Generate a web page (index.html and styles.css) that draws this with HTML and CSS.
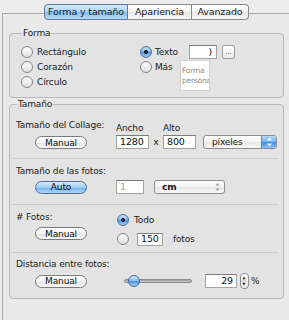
FILE: index.html
```html
<!DOCTYPE html>
<html lang="es">
<head>
<meta charset="utf-8">
<title>Forma y tamaño</title>
<link rel="stylesheet" href="styles.css">
</head>
<body>
<div class="tabs">
  <div class="tab t1 sel">Forma y tamaño</div>
  <div class="tab t2">Apariencia</div>
  <div class="tab t3">Avanzado</div>
</div>
<div class="panel">
  <fieldset class="group forma">
    <legend>Forma</legend>
    <div class="forma-cols">
      <div class="col1">
        <div class="opt"><span class="radio"></span><span class="olbl">Rectángulo</span></div>
        <div class="opt"><span class="radio"></span><span class="olbl">Corazón</span></div>
        <div class="opt"><span class="radio"></span><span class="olbl">Círculo</span></div>
      </div>
      <div class="col2">
        <div class="opt"><span class="radio on"></span><span class="olbl w-texto">Texto</span><span class="field ftexto">)</span><span class="dots">...</span></div>
        <div class="opt top">
          <div class="opt"><span class="radio"></span><span class="olbl w-mas">Más</span></div>
          <div class="custom"><span>Forma</span><span>persona</span></div>
        </div>
      </div>
    </div>
  </fieldset>

  <fieldset class="group tam">
    <legend>Tamaño</legend>

    <div class="sec">
      <div class="left">
        <div class="lbl">Tamaño del Collage:</div>
        <div class="btn">Manual</div>
      </div>
      <div class="right">
        <div class="hdr"><span class="w-ancho">Ancho</span><span>Alto</span></div>
        <div class="frow">
          <span class="field f1280">1280</span><span class="times">x</span><span class="field f800">800</span>
          <span class="popup pix"><span class="ptxt">píxeles</span><span class="parrows blue"><svg width="7" height="10" viewBox="0 0 7 10"><path d="M3.5 0.5 L6 3.5 H1 Z M3.5 9.5 L6 6.5 H1 Z" fill="#fff"/></svg></span></span>
        </div>
      </div>
    </div>

    <div class="sep"></div>

    <div class="sec2">
      <div class="lbl">Tamaño de las fotos:</div>
      <div class="row r2">
        <div class="btn blue">Auto</div>
        <span class="field f1 dis">1</span>
        <span class="popup cm"><span class="ptxt strong">cm</span><span class="parrows"><svg width="7" height="10" viewBox="0 0 7 10"><path d="M3.5 1 L5.5 3.5 H1.5 Z M3.5 9 L5.5 6.5 H1.5 Z" fill="#a0a0a0"/></svg></span></span>
      </div>
    </div>

    <div class="sep sep2"></div>

    <div class="sec sec3">
      <div class="left">
        <div class="lbl"># Fotos:</div>
        <div class="btn b3">Manual</div>
      </div>
      <div class="right r3">
        <div class="opt o1"><span class="radio on"></span><span class="olbl">Todo</span></div>
        <div class="opt o2"><span class="radio"></span><span class="field f150">150</span><span class="olbl fotos">fotos</span></div>
      </div>
    </div>

    <div class="sep sep3"></div>

    <div class="sec4">
      <div class="lbl">Distancia entre fotos:</div>
      <div class="row r4">
        <div class="btn">Manual</div>
        <div class="slider"><span class="knob"></span></div>
        <span class="field f29">29</span>
        <span class="stepper"><svg width="9" height="16" viewBox="0 0 9 16"><path d="M4.5 3 L6.5 6 H2.5 Z M4.5 13 L6.5 10 H2.5 Z" fill="#333"/><path d="M1 8 H8" stroke="#bbb" stroke-width="1"/></svg></span>
        <span class="pct">%</span>
      </div>
    </div>
  </fieldset>
</div>
</body>
</html>
```

FILE: styles.css
```css
html, body {
  margin: 0;
  padding: 0;
}
body {
  width: 289px;
  height: 320px;
  overflow: hidden;
  background: #ececec;
  font-family: "DejaVu Sans", sans-serif;
  font-size: 9px;
  letter-spacing: -0.15px;
  line-height: 12px;
  color: #1b1b1b;
}

/* Tabs */
.tabs {
  display: flex;
  margin: 4px 0 0 44px;
  height: 16px;
  position: relative;
  z-index: 1;
}
.tab {
  box-sizing: border-box;
  height: 16px;
  border: 1px solid #8b8b8b;
  border-left: none;
  background: linear-gradient(#ffffff, #f3f3f3 50%, #e8e8e8 51%, #f6f6f6);
  display: flex;
  align-items: center;
  justify-content: center;
  font-size: 9.5px;
}
.t1 { width: 84px; border-left: 1px solid #6c86a8; border-radius: 4px 0 0 4px; }
.t2 { width: 64px; }
.t3 { width: 57px; border-radius: 0 4px 4px 0; }
.tab.sel {
  background: linear-gradient(#d6eafc, #a9d2f6 50%, #82bdf2 51%, #b6dcfa);
  border-color: #5a7aa3;
}

/* Panel */
.panel {
  margin: -7px 0 0 2px;
  width: 300px;
  height: 320px;
  box-sizing: border-box;
  border-top: 1px solid #a8a8a8;
  border-left: 1px solid #a8a8a8;
  background: #e9e9e9;
  padding: 13px 0 0 6px;
}

.group {
  margin: 0;
  width: 275px;
  box-sizing: border-box;
  border: 1px solid #b9b9b9;
  border-radius: 4px;
  background: #e3e3e3;
  min-width: 0;
}
.group legend {
  padding: 0 1px;
  margin-left: 1px;
  font-size: 9px;
  line-height: 12px;
  color: #1b1b1b;
}

/* Forma */
.forma {
  padding: 5px 5px 6px 11px;
}
.forma-cols {
  display: flex;
}
.col1 {
  width: 119px;
}
.opt {
  display: flex;
  align-items: center;
  height: 15px;
}
.opt.top {
  align-items: flex-start;
  height: auto;
}
.radio {
  flex: none;
  width: 12px;
  height: 12px;
  box-sizing: border-box;
  border-radius: 50%;
  border: 1px solid #8a8a8a;
  background: linear-gradient(#ffffff, #f0f0f0 50%, #dcdcdc);
  box-shadow: inset 0 1px 1px rgba(0,0,0,0.08);
}
.radio.on {
  border-color: #4b74a6;
  background:
    radial-gradient(circle, #15202e 0 1.6px, rgba(21,32,46,0) 2.3px),
    linear-gradient(#d3e8fc, #7ab6f0 50%, #4d97e6 55%, #9dcdf7);
}
.olbl {
  margin-left: 4px;
  white-space: nowrap;
}
.w-texto { width: 34px; margin-left: 3px; }
.w-mas { width: 25px; margin-left: 3px; }

.field {
  box-sizing: border-box;
  height: 14px;
  background: #fff;
  border: 1px solid #a3a3a3;
  border-top-color: #7c7c7c;
  display: flex;
  align-items: center;
  padding: 0 3px;
  font-size: 9.5px;
  color: #111;
}
.ftexto {
  width: 28px;
  justify-content: flex-end;
  padding-right: 4px;
}
.dots {
  box-sizing: border-box;
  margin-left: 5px;
  width: 13px;
  height: 14px;
  border: 1px solid #9d9d9d;
  border-radius: 2px;
  background: linear-gradient(#ffffff, #ececec);
  display: flex;
  align-items: center;
  justify-content: center;
  font-size: 7px;
  color: #444;
  letter-spacing: 0;
}
.custom {
  box-sizing: border-box;
  margin-top: 1px;
  width: 30px;
  height: 31px;
  background: #fff;
  border: 1px solid #d2d2d2;
  overflow: hidden;
  padding: 5px 0 0 1px;
  display: flex;
  flex-direction: column;
  color: #8f8f8f;
  font-size: 7.5px;
  letter-spacing: -0.2px;
  line-height: 10px;
}
.custom span {
  white-space: nowrap;
}

/* Tamaño */
.tam {
  padding: 9px 5px 10px 6px;
}
.sec {
  display: flex;
}
.left {
  width: 100px;
  flex: none;
}
.lbl {
  height: 12px;
  white-space: nowrap;
}
.btn {
  box-sizing: border-box;
  width: 52px;
  height: 13px;
  border: 1px solid #7b7b7b;
  border-radius: 7px;
  background: linear-gradient(#ffffff, #f4f4f4 50%, #e3e3e3 51%, #f7f7f7);
  display: flex;
  align-items: center;
  justify-content: center;
  font-size: 9px;
  color: #111;
}
.left .btn {
  margin: 5px 0 0 19px;
}
.btn.blue {
  border-color: #4c6f9c;
  background: linear-gradient(#d6eafc, #9fcdf6 50%, #6fb0ef 51%, #aad6fa);
}
.hdr {
  margin-top: 3px;
  display: flex;
}
.w-ancho { width: 47px; }
.frow {
  margin-top: 1px;
  display: flex;
  align-items: center;
}
.f1280, .f800 { width: 33px; }
.times {
  width: 14px;
  text-align: center;
}
.popup {
  box-sizing: border-box;
  height: 14px;
  border: 1px solid #8e8e8e;
  border-radius: 3px;
  background: linear-gradient(#ffffff, #f3f3f3 50%, #e6e6e6 51%, #f8f8f8);
  display: flex;
  align-items: center;
  overflow: hidden;
}
.pix {
  margin-left: 7px;
  width: 74px;
}
.ptxt {
  flex: 1;
  padding-left: 8px;
}
.strong { font-weight: bold; padding-left: 7px; }
.parrows {
  width: 14px;
  height: 100%;
  display: flex;
  align-items: center;
  justify-content: center;
}
.parrows.blue {
  background: linear-gradient(#b8dafa, #6eb0f0 50%, #3d8fe6 51%, #86c2f6);
  border-left: 1px solid #6687b2;
}

.sep {
  height: 1px;
  background: #cdcdcd;
  margin: 9px 0 0 -3px;
}
.sec2 .lbl { margin-top: 6px; }
.row {
  display: flex;
  align-items: center;
}
.r2 {
  margin-top: 3px;
  height: 14px;
}
.r2 .btn { margin-left: 19px; }
.f1 {
  margin-left: 29px;
  width: 28px;
}
.dis { color: #a8a8a8; }
.cm {
  margin-left: 10px;
  width: 71px;
}

.sep2 { margin-top: 10px; }
.sec3 { margin-top: 6px; }
.sec3 .b3 { margin-top: 4px; }
.r3 {
  margin-top: 1px;
  padding-left: 1px;
}
.o1 .olbl { margin-left: 5px; }
.o2 {
  margin-top: 4px;
  height: 16px;
}
.f150 {
  margin-left: 8px;
  width: 26px;
  height: 13px;
}
.fotos { margin-left: 10px; }

.sep3 { margin-top: 5px; }
.sec4 .lbl { margin-top: 5px; }
.r4 {
  margin-top: 4px;
  height: 14px;
}
.r4 .btn { margin-left: 19px; }
.slider {
  position: relative;
  margin-left: 37px;
  width: 68px;
  height: 4px;
  box-sizing: border-box;
  border-radius: 2px;
  border: 1px solid #8f8f8f;
  background: linear-gradient(#9a9a9a, #d0d0d0);
}
.knob {
  position: absolute;
  left: 3px;
  top: -5px;
  width: 12px;
  height: 12px;
  box-sizing: border-box;
  border-radius: 50%;
  border: 1px solid #44689a;
  background: linear-gradient(#d6eafc, #84bdf3 50%, #4f98e7 55%, #a4d1f8);
}
.f29 {
  margin-left: 13px;
  width: 32px;
  justify-content: flex-end;
}
.stepper {
  box-sizing: border-box;
  margin-left: 3px;
  width: 9px;
  height: 16px;
  border: 1px solid #8e8e8e;
  border-radius: 4px;
  background: linear-gradient(#ffffff, #e9e9e9);
  display: flex;
  overflow: hidden;
}
.stepper svg { margin: -1px 0 0 -1px; }
.pct { margin-left: 2px; }
```
